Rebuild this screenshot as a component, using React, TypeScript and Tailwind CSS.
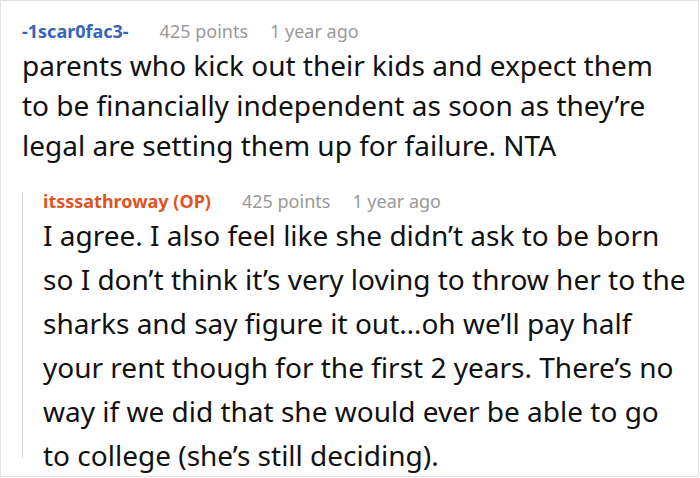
import React from 'react';

interface CommentProps {
  author: string;
  op?: boolean;
  points: number;
  age: string;
  children: React.ReactNode;
}

function Meta({ author, op, points, age }: Omit<CommentProps, 'children'>) {
  return (
    <div className="flex items-center gap-[22px] text-[18px] leading-[18px]">
      <span className={`font-bold mr-[9px] ${op ? 'text-[#e0541f]' : 'text-[#3565b8]'}`}>
        {author}
        {op && ' (OP)'}
      </span>
      <span className="text-[#999999]">{points} points</span>
      <span className="text-[#999999]">{age}</span>
    </div>
  );
}

export default function App() {
  return (
    <div
      className="w-[699px] h-[477px] border border-[#e3e3e3] bg-white"
      style={{ fontFamily: '"Noto Sans", "Open Sans", sans-serif' }}
    >
      <div className="pl-[21px] pt-[21px]">
        {/* Parent comment */}
        <Meta author="-1scar0fac3-" points={425} age="1 year ago" />
        <p className="mt-[5px] w-[655px] text-[28px] leading-[40px] text-[#111111]">
          parents who kick out their kids and expect them to be financially independent as soon as
          they’re legal are setting them up for failure. NTA
        </p>

        {/* Reply */}
        <div className="mt-[27px] h-[266px] border-l border-[#dddddd] pl-[20px]">
          <Meta author="itsssathroway" op points={425} age="1 year ago" />
          <p className="mt-[3px] w-[650px] text-[28px] leading-[44px] text-[#111111]">
            I agree. I also feel like she didn’t ask to be born so I don’t think it’s very loving to
            throw her to the sharks and say figure it out…oh we’ll pay half your rent though for the
            first 2 years. There’s no way if we did that she would ever be able to go to college
            (she’s still deciding).
          </p>
        </div>
      </div>
    </div>
  );
}
